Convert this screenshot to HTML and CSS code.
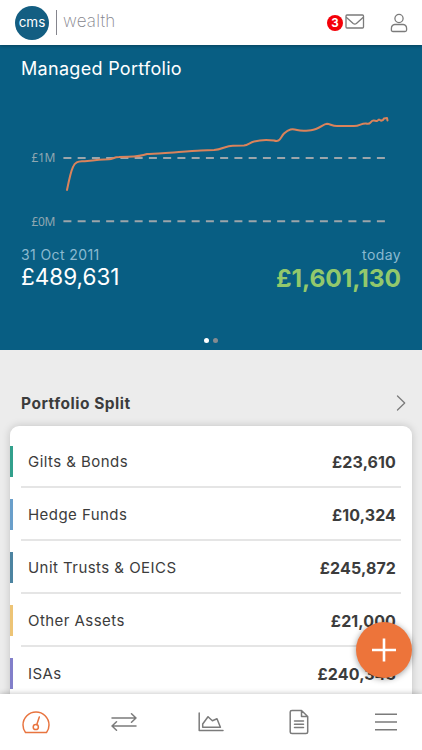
FILE: index.html
```html
<!DOCTYPE html>
<html lang="en">
<head>
<meta charset="UTF-8">
<meta name="viewport" content="width=device-width, initial-scale=1.0">
<title>CMS Wealth</title>
<link rel="stylesheet" href="styles.css">
</head>
<body>

<div class="app">
  <header class="header">
    <div class="logo">
      <span class="logo-circle">cms</span>
      <span class="logo-name">wealth</span>
    </div>
    <div class="header-actions">
      <span class="badge">3</span>
      <svg class="icon-mail" width="20" height="16" viewBox="0 0 20 16">
        <rect x="1" y="1" width="17.5" height="13" rx="1"/>
        <path d="M1.5 3.5 L8.2 9.6 Q9.8 10.8 11.4 9.6 L18 3.5"/>
      </svg>
      <svg class="icon-user" width="18" height="20" viewBox="0 0 18 20">
        <circle cx="9" cy="5.5" r="4.1"/>
        <path d="M4.8 11.5 H13.2 Q16.6 12 16.6 15.5 V17 Q16.6 18.5 15 18.5 H3 Q1.4 18.5 1.4 17 V15.5 Q1.4 12 4.8 11.5 Z"/>
      </svg>
    </div>
  </header>

  <section class="hero">
    <h1>Managed Portfolio</h1>
    <svg class="chart" width="422" height="150" viewBox="0 90 422 150">
      <text x="31.5" y="161.5" textLength="24">£1M</text>
      <text x="31.5" y="225.5" textLength="24">£0M</text>
      <path class="grid-line" d="M63.4 158 H385 M63.4 221.2 H385"/>
      <path class="line" d="M67 190 C69 180 71 171 73 167 C75 162 78 161.5 82 161.3 C88 161 92 161 99 159.8 L109 159.3 C113 159 114 157 119 157 L128 156.8 C136 156.5 143 155.5 147 154 C150 153.5 156 153.8 162 153.3 C178 152.2 190 150.8 201 150.5 L214 150 C222 149.5 226 145.6 233 145.7 L244 145.6 C248 145 250 142.5 254 141.6 C261 139.5 269 139.8 274 140.5 C280 142.5 280 138 284 133.5 C289 129 292 128.5 297 130 C302 131.4 306 130.7 311 130.3 C319 129.5 323 124 327 123.8 C330 123.8 332 126.1 337 126.1 L354 126.1 C360 126.1 361 123.2 366 123.5 C370 125 370 122.5 372 121 C374 119.8 375 121 377 121 L379 119.5 L381 120.7 L383 120 L384 118.4 L387 118 L387.5 120.5"/>
    </svg>
    <div class="amounts">
      <div class="amount">
        <span class="amount-label">31 Oct 2011</span>
        <span class="amount-start">£489,631</span>
      </div>
      <div class="amount amount-right">
        <span class="amount-label">today</span>
        <span class="amount-today">£1,601,130</span>
      </div>
    </div>
    <div class="dots">
      <span class="dot dot-active"></span>
      <span class="dot"></span>
    </div>
  </section>

  <main class="split">
    <div class="split-title">
      <h2>Portfolio Split</h2>
      <svg width="10" height="16" viewBox="0 0 10 16"><path d="M1.5 1 L8.7 8 L1.5 15"/></svg>
    </div>
    <ul class="card">
      <li class="row green"><span class="name">Gilts &amp; Bonds</span><span class="value">£23,610</span></li>
      <li class="row sky"><span class="name">Hedge Funds</span><span class="value">£10,324</span></li>
      <li class="row blue"><span class="name">Unit Trusts &amp; OEICS</span><span class="value">£245,872</span></li>
      <li class="row yellow"><span class="name">Other Assets</span><span class="value">£21,000</span></li>
      <li class="row purple"><span class="name">ISAs</span><span class="value">£240,343</span></li>
    </ul>
  </main>

  <button class="add-btn" aria-label="Add">
    <svg width="26" height="26" viewBox="0 0 26 26"><path d="M13 1.5 V24.5 M1 13 H25"/></svg>
  </button>

  <nav class="nav">
    <a class="nav-item active">
      <svg width="30" height="24" viewBox="0 0 30 24">
        <path d="M4.5 22.5 H25.5 Q28 19.5 28 15 C28 7.5 22 2 15 2 C8 2 2 7.5 2 15 Q2 19.5 4.5 22.5 Z"/>
        <circle cx="14.8" cy="17" r="2.6"/>
        <path d="M15.8 14.5 L18.3 7"/>
      </svg>
    </a>
    <a class="nav-item">
      <svg width="26" height="20" viewBox="0 0 26 20">
        <path d="M1 6 H25 M20.5 1.7 L25 6 L20.5 10.3 M25 14 H1 M5.5 9.7 L1 14 L5.5 18.3"/>
      </svg>
    </a>
    <a class="nav-item">
      <svg width="26" height="20" viewBox="0 0 26 20">
        <path d="M1.2 1 V18.5 H25 M4.7 15.2 V12 L10 4.7 L14.4 8.7 L19 6.7 L22.4 15.2 Z"/>
      </svg>
    </a>
    <a class="nav-item">
      <svg width="20" height="26" viewBox="0 0 20 26">
        <path d="M12.5 1.5 H3 Q1.2 1.5 1.2 3 V23 Q1.2 24.5 3 24.5 H17 Q18.7 24.5 18.7 23 V7.5 Z M12.5 1.5 V7.5 H18.7 M5.5 12 H14.5 M5.5 15.3 H14.5 M5.5 18.6 H14.5"/>
      </svg>
    </a>
    <a class="nav-item">
      <svg width="22" height="18" viewBox="0 0 22 18">
        <path d="M0 1.2 H22 M0 9 H22 M0 16.8 H22"/>
      </svg>
    </a>
  </nav>
</div>

</body>
</html>
```
FILE: styles.css
```css
* {
  box-sizing: border-box;
}

body {
  margin: 0;
  font-family: Inter, "Liberation Sans", sans-serif;
  background: #ececec;
  color: #3c3c3c;
}

svg {
  display: block;
  fill: none;
  stroke: #7b7b7b;
  stroke-width: 1.3;
  stroke-linecap: round;
  stroke-linejoin: round;
}

.app {
  position: relative;
  display: flex;
  flex-direction: column;
  width: 422px;
  height: 750px;
  overflow: hidden;
}

.header {
  display: flex;
  justify-content: space-between;
  flex: none;
  height: 45px;
  padding: 0 14px 0 15px;
  background: #fff;
  box-shadow: 0 1px 3px rgba(0,0,0,0.3);
  z-index: 1;
}

.logo,
.header-actions {
  display: flex;
  align-items: center;
}

.logo-circle {
  width: 34px;
  height: 34px;
  border-radius: 50%;
  background: #135e82;
  color: #fff;
  font-size: 13.5px;
  line-height: 32px;
  text-align: center;
}

.logo-name {
  margin-left: 7px;
  padding-left: 6px;
  padding-bottom: 2px;
  border-left: 1px solid #85858d;
  color: #85858d;
  font-size: 17px;
  font-weight: 200;
  letter-spacing: 0.2px;
  line-height: 23px;
}

.badge {
  width: 16px;
  height: 16px;
  margin: 1px 2px 0 0;
  border-radius: 50%;
  background: #f40008;
  color: #fff;
  font-size: 11.5px;
  font-weight: 700;
  line-height: 16px;
  text-align: center;
}

.icon-mail {
  margin-top: -1px;
}

.icon-user {
  margin: 1px 0 0 25px;
}

.hero {
  flex: none;
  height: 305px;
  background: #085e83;
  color: #fff;
}

.hero h1 {
  height: 45px;
  margin: 0;
  padding: 12px 21px 0;
  font-size: 18px;
  font-weight: 400;
  letter-spacing: 0.3px;
  line-height: 24px;
}

.chart text {
  fill: #8fa7b1;
  stroke: none;
  font-family: "Noto Sans", sans-serif;
  font-size: 12px;
}

.chart .grid-line {
  stroke: #9ca5aa;
  stroke-width: 2;
  stroke-linecap: butt;
  stroke-dasharray: 8 6.25;
}

.chart .line {
  stroke: #da835b;
  stroke-width: 2;
}

.amounts {
  display: flex;
  justify-content: space-between;
  padding: 6px 21px 0;
}

.amount {
  display: flex;
  flex-direction: column;
}

.amount-right {
  align-items: flex-end;
}

.amount-label {
  color: #8bb9d0;
  font-size: 14px;
  letter-spacing: 0.4px;
  line-height: 18px;
}

.amount-start,
.amount-today {
  font-size: 22.5px;
  line-height: 26px;
}

.amount-today {
  color: #92c86c;
  font-size: 24.5px;
  font-weight: 700;
  letter-spacing: -0.05px;
  line-height: 28px;
}

.dots {
  display: flex;
  justify-content: center;
  gap: 4px;
  padding-top: 46px;
}

.dot {
  width: 5px;
  height: 5px;
  border-radius: 50%;
  background: #858b90;
}

.dot-active {
  background: #fff;
}

.split-title {
  display: flex;
  justify-content: space-between;
  align-items: center;
  height: 76px;
  padding: 30px 16px 0 21px;
}

.split-title h2 {
  margin: 0;
  font-size: 15.5px;
  font-weight: 700;
  letter-spacing: 0.5px;
}

.card {
  height: 400px;
  margin: 0 10px;
  padding: 9px 0 0;
  border-radius: 9px;
  background: #fff;
  box-shadow: 0 0 8px rgba(0,0,0,0.18);
  list-style: none;
}

.row {
  display: flex;
  justify-content: space-between;
  align-items: center;
  height: 53px;
  padding: 0 16px 0 18px;
  background:
    linear-gradient(var(--color), var(--color)) 0 11px / 3px 31px no-repeat,
    linear-gradient(#e5e5e5, #e5e5e5) 11px 100% / 380px 2px no-repeat;
}

.name {
  font-size: 15px;
  letter-spacing: 0.45px;
}

.value {
  font-size: 16px;
  font-weight: 700;
  letter-spacing: 0.1px;
}

.green { --color: #32a08c; }
.sky { --color: #6a9fca; }
.blue { --color: #4d84a1; }
.yellow { --color: #edc476; }
.purple { --color: #827fca; }

.add-btn {
  position: absolute;
  right: 10px;
  bottom: 72px;
  display: flex;
  justify-content: center;
  align-items: center;
  width: 56px;
  height: 56px;
  padding: 0;
  border: none;
  border-radius: 50%;
  background: #ed743a;
  box-shadow: 0 1px 6px rgba(0,0,0,0.4);
}

.add-btn svg {
  stroke: #fff;
  stroke-width: 2.6;
  stroke-linecap: butt;
}

.nav {
  position: absolute;
  left: 0;
  right: 0;
  bottom: 0;
  display: flex;
  justify-content: space-between;
  align-items: center;
  height: 56px;
  padding: 0 21px;
  background: #fff;
  box-shadow: 0 -1px 5px rgba(0,0,0,0.2);
}

.nav-item {
  display: flex;
  justify-content: center;
  width: 30px;
}

.nav-item svg {
  stroke-width: 1.5;
}

.nav-item.active svg {
  stroke: #e8743f;
}
```
